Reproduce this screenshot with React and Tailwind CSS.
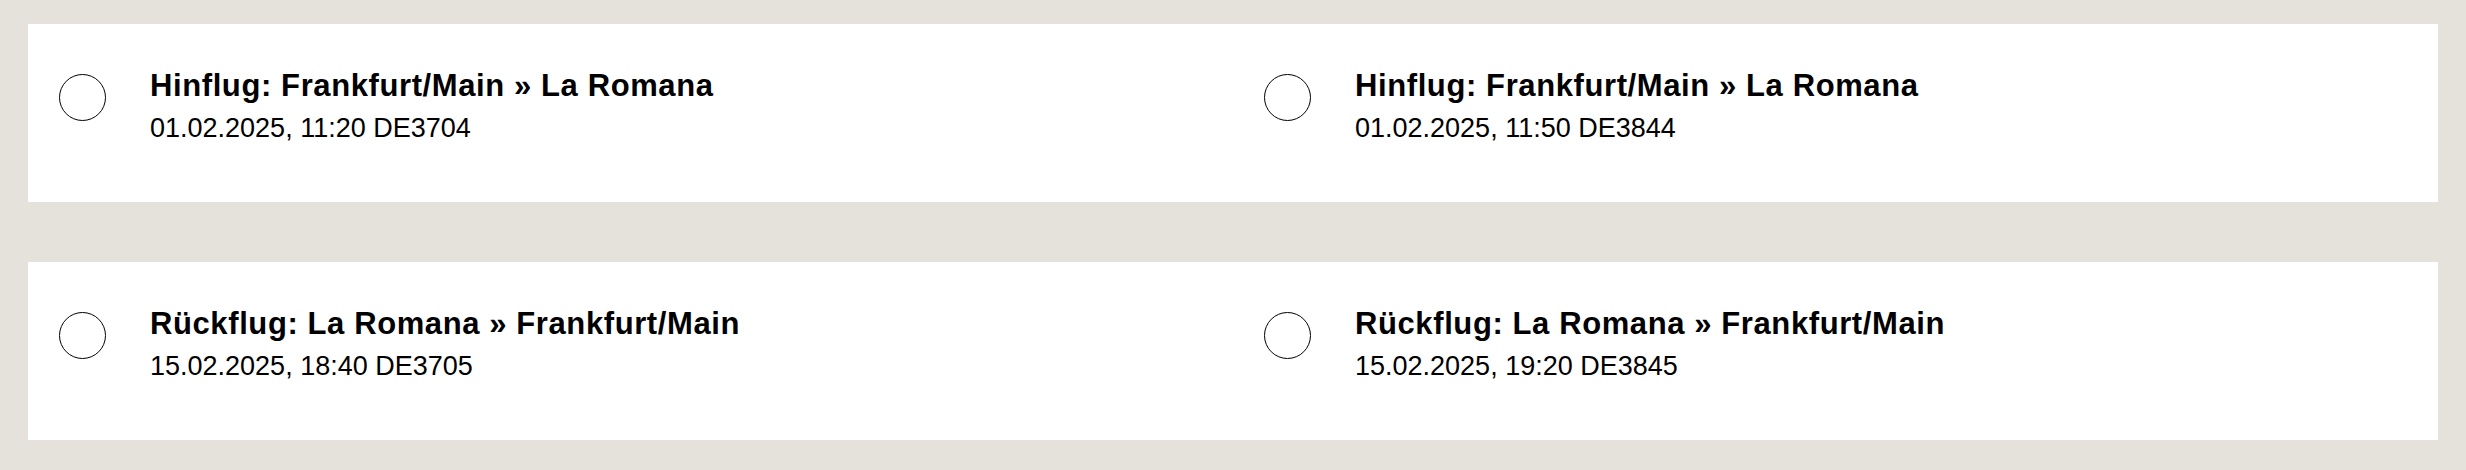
import React from 'react'

const rows = [
  {
    label: 'Hinflug:',
    route: 'Frankfurt/Main » La Romana',
    options: ['01.02.2025, 11:20 DE3704', '01.02.2025, 11:50 DE3844'],
  },
  {
    label: 'Rückflug:',
    route: 'La Romana » Frankfurt/Main',
    options: ['15.02.2025, 18:40 DE3705', '15.02.2025, 19:20 DE3845'],
  },
]

const FlightOption = ({ label, route, info }) => {
  return (
    <label className='flex items-start px-[31px] pt-[44px] cursor-pointer'>
      <span className='mt-[6px] w-[47px] h-[47px] shrink-0 rounded-full border border-black bg-white' />
      <span className='ml-[44px] flex flex-col'>
        <span className='text-[31px] leading-[36px] tracking-[0.6px] text-black'>
          <b className='font-bold'>{label}</b> <span className='font-bold'>{route}</span>
        </span>
        <span className='mt-[7px] text-[27px] leading-[34px] text-black'>{info}</span>
      </span>
    </label>
  )
}

const App = () => {
  return (
    <main className='w-full min-h-[470px] bg-[#e5e2dc] px-[28px] pt-[24px] pb-[31px] flex flex-col gap-[60px] font-["Liberation_Sans",Arial,sans-serif]'>
      {rows.map((r) => (
        <section key={r.label} className='bg-white h-[178px] grid grid-cols-2'>
          {r.options.map((o) => (
            <FlightOption key={o} label={r.label} route={r.route} info={o} />
          ))}
        </section>
      ))}
    </main>
  )
}

export default App
